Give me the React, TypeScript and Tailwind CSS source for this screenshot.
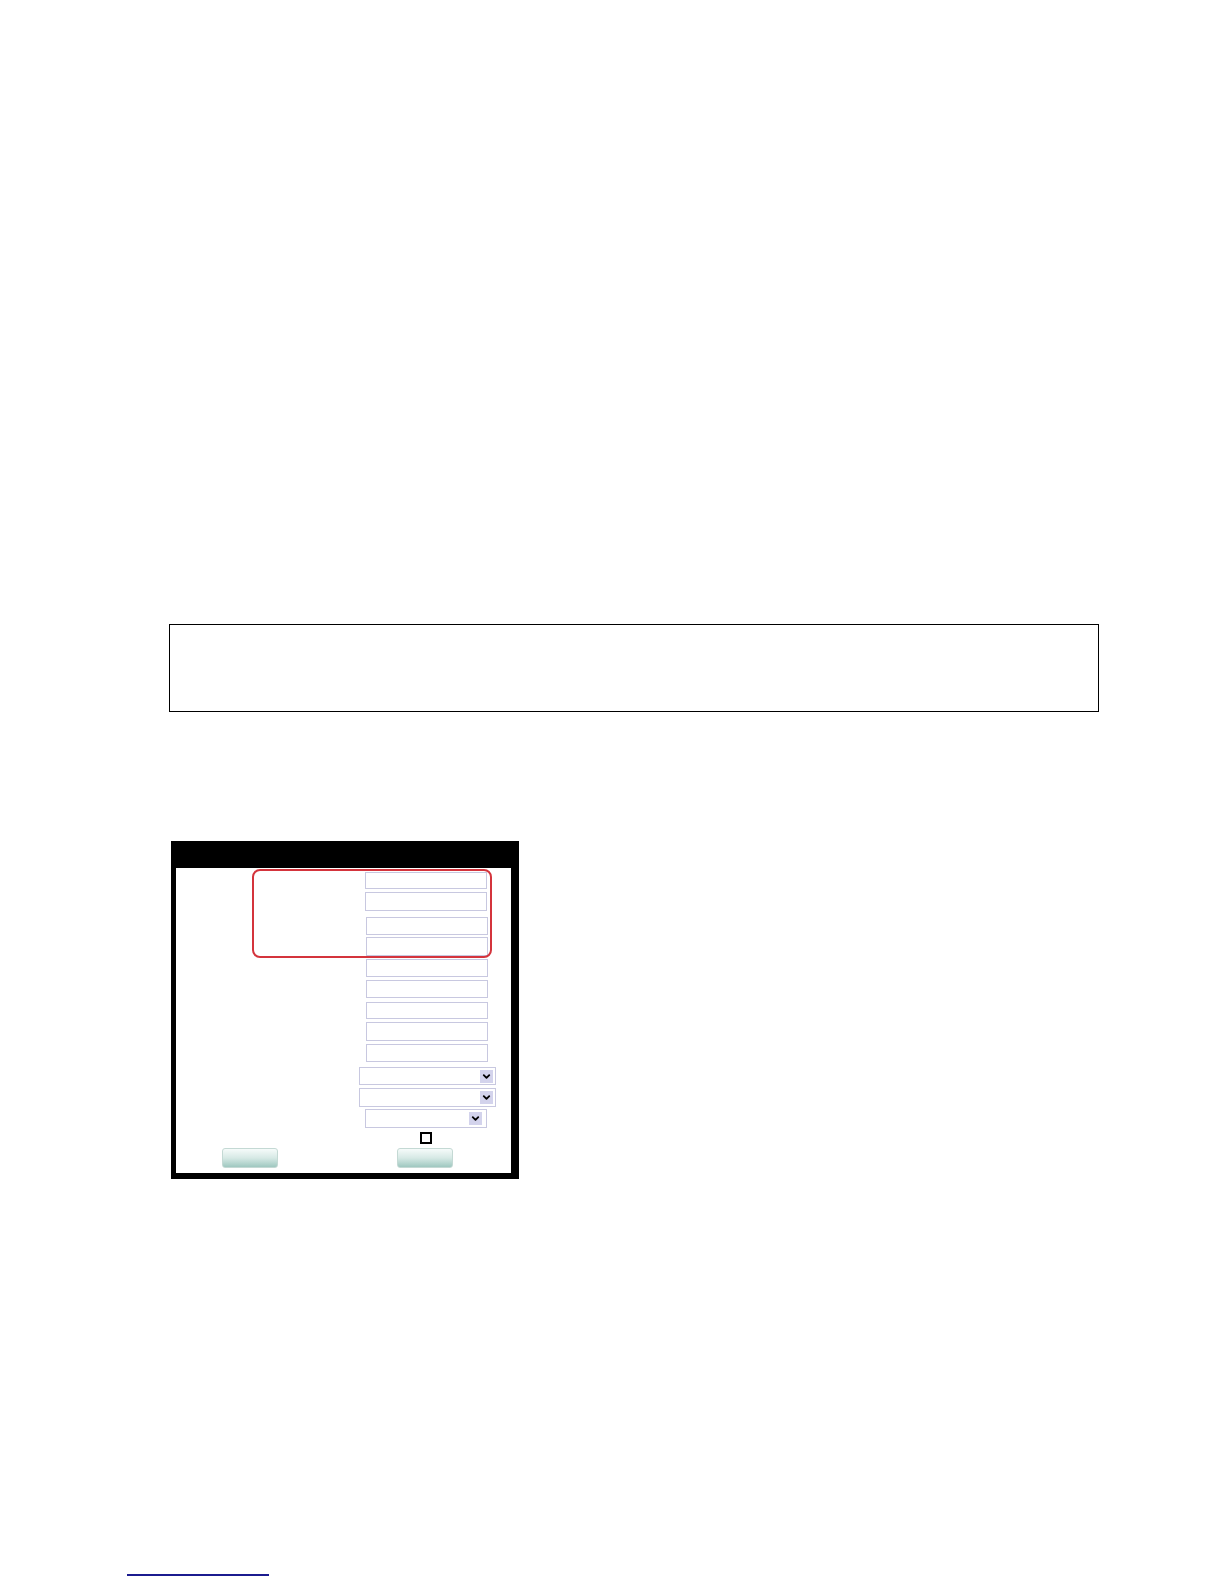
import React from "react";
import { ChevronDown } from "lucide-react";

// Plain text box, lavender framed
function Field({ className }: { className: string }) {
  return <div className={`bg-white border-[1.5px] border-[#c8c8e0] ${className}`} />;
}

// Dropdown with a small lavender arrow tile on the right
function Select({ className }: { className: string }) {
  return (
    <div className={`bg-white border-[1.5px] border-[#c8c8e0] flex items-center justify-end pr-[2px] ${className}`}>
      <div className="w-[13px] h-[13px] bg-[#d3d3ec] flex items-center justify-center">
        <ChevronDown size={11} strokeWidth={4} className="text-black" />
      </div>
    </div>
  );
}

function FormButton({ className }: { className: string }) {
  return (
    <button
      type="button"
      className={`w-[56px] h-[20px] rounded-[3px] border border-[#c4d9d4] bg-linear-to-b from-[#f6fbfa] via-[#d6e9e5] to-[#9fc8c0] ${className}`}
    />
  );
}

export default function App() {
  return (
    <div className="w-[1224px] h-[1584px] bg-white flex flex-col font-['Liberation_Sans',sans-serif]">
      {/* Empty framed note box */}
      <div className="ml-[169px] mt-[624px] w-[930px] h-[88px] border border-black" />

      {/* Form panel */}
      <div className="ml-[171px] mt-[129px] w-[348px] h-[338px] bg-black flex flex-col">
        <div className="h-[27px]" />
        <div className="ml-[5px] mr-[8px] h-[305px] bg-white relative flex flex-col">
          <Field className="ml-[189px] w-[122px] mt-[4px] h-[17px]" />
          <Field className="ml-[189px] w-[122px] mt-[3px] h-[19px] border-2" />
          <Field className="ml-[190px] w-[122px] mt-[6px] h-[18px]" />
          <Field className="ml-[190px] w-[122px] mt-[2px] h-[19px]" />
          <Field className="ml-[190px] w-[122px] mt-[3px] h-[18px]" />
          <Field className="ml-[190px] w-[122px] mt-[3px] h-[18px]" />
          <Field className="ml-[190px] w-[122px] mt-[4px] h-[17px]" />
          <Field className="ml-[190px] w-[122px] mt-[3px] h-[19px]" />
          <Field className="ml-[190px] w-[122px] mt-[3px] h-[18px]" />
          <Select className="ml-[183px] w-[137px] mt-[5px] h-[18px]" />
          <Select className="ml-[183px] w-[137px] mt-[3px] h-[19px]" />
          <Select className="ml-[189px] w-[122px] mt-[2px] h-[19px] pr-[4px]" />
          <div className="ml-[244px] mt-[4px] w-[12px] h-[12px] border-2 border-black" />
          <div className="mt-[4px] flex">
            <FormButton className="ml-[46px]" />
            <FormButton className="ml-[119px]" />
          </div>

          {/* Red highlight over the first four fields */}
          <div className="absolute left-[76px] top-[1px] w-[240px] h-[89px] border-2 border-[#d4343c] rounded-[8px]" />
        </div>
      </div>

      {/* Footnote link rule */}
      <div className="ml-[127px] mt-[395px] w-[142px] h-[2px] bg-[#1b1b8f]" />
    </div>
  );
}
